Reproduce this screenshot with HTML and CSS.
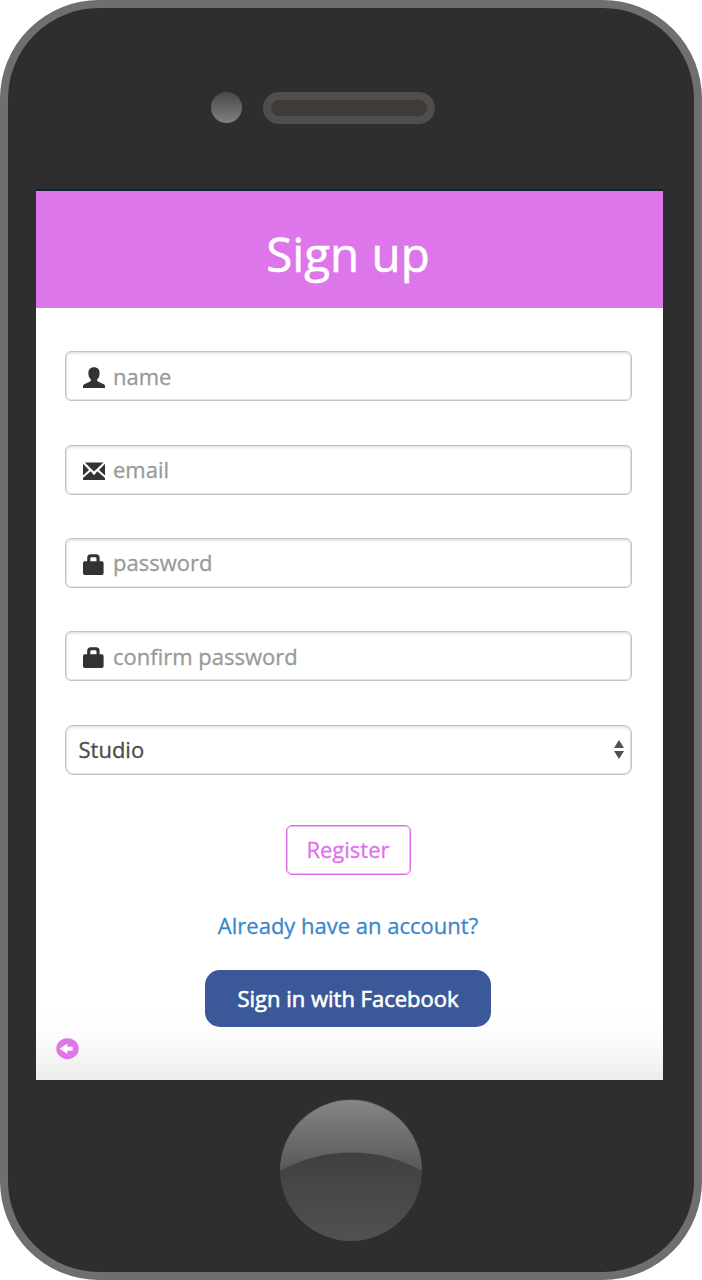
FILE: index.html
```html
<!DOCTYPE html>
<html lang="en">
<head>
<meta charset="utf-8">
<title>Sign up</title>
<link rel="stylesheet" href="styles.css">
</head>
<body>
<div class="phone">
  <div class="earpiece">
    <span class="camera"></span>
    <span class="speaker"></span>
  </div>
  <main class="screen">
    <header class="header"><h1 class="title">Sign up</h1></header>
    <form class="form">
      <label class="field">
        <svg class="icon" viewBox="0 0 24 24"><path d="M12 1.300c3.700 0 5.600 2.300 5.600 5.600 0 2.500-.6 4.600-2 6.100-.8.900-.7 2.100.3 2.600l5.300 2.400c1.400.6 1.800 1.300 1.800 2.700v1.300H1v-1.300c0-1.400.4-2.100 1.800-2.700l5.300-2.400c1-.5 1.100-1.700.3-2.600-1.400-1.500-2-3.600-2-6.100 0-3.300 1.900-5.600 5.600-5.600z"/></svg>
        <span class="hint">name</span>
      </label>
      <label class="field">
        <svg class="icon" viewBox="0 0 24 24"><path d="M2.800 3.500h18.800L12 12.400zM1 4.800l6 6.100-6 5.700zM23 4.800v11.800l-6-5.700zM1 21v-2l7.700-6.700 3.300 3.900 3.300-3.900L23 19v2z"/></svg>
        <span class="hint">email</span>
      </label>
      <label class="field">
        <svg class="icon" viewBox="0 0 24 24"><path fill-rule="evenodd" d="M5.200 8.200V4.700q0-3.500 3.500-3.500h5.400q3.500 0 3.500 3.500v3.500h2.200q1.800 0 1.800 1.800v10.300q0 1.800-1.800 1.800H2.800Q1 22.100 1 20.300V10q0-1.800 1.800-1.800zM8.300 8.200h6.200V5.500q0-1.200-1.200-1.200H9.500q-1.200 0-1.200 1.200z"/></svg>
        <span class="hint">password</span>
      </label>
      <label class="field">
        <svg class="icon" viewBox="0 0 24 24"><path fill-rule="evenodd" d="M5.200 8.200V4.700q0-3.500 3.500-3.500h5.400q3.500 0 3.500 3.500v3.500h2.200q1.800 0 1.800 1.800v10.300q0 1.800-1.800 1.800H2.800Q1 22.100 1 20.300V10q0-1.800 1.800-1.800zM8.300 8.200h6.200V5.500q0-1.200-1.200-1.200H9.500q-1.200 0-1.200 1.200z"/></svg>
        <span class="hint">confirm password</span>
      </label>
      <div class="field select">
        <span>Studio</span>
        <svg class="arrows" viewBox="0 0 10 19"><path d="M5 0l5 8H0zM0 11h10l-5 8z"/></svg>
      </div>
    </form>
    <div class="actions">
      <button class="register" type="button">Register</button>
      <a class="account">Already have an account?</a>
      <button class="facebook" type="button">Sign in with Facebook</button>
    </div>
    <footer class="footer">
      <svg class="back" viewBox="0 0 23 22"><ellipse cx="11.500" cy="10.700" rx="11.200" ry="10.500"/><path fill="#fff" d="M3.600 10.700l7.700-5.300v3.300h5.400v4h-5.400V16z"/></svg>
    </footer>
  </main>
  <svg class="home" viewBox="0 0 142 142">
    <defs>
      <linearGradient id="base" x1="0" y1="0" x2="0" y2="1"><stop offset=".38" stop-color="#404040"/><stop offset="1" stop-color="#515151"/></linearGradient>
      <linearGradient id="shine" x1="0" y1="0" x2="0" y2="1"><stop offset="0" stop-color="#858585"/><stop offset="1" stop-color="#585858"/></linearGradient>
    </defs>
    <circle cx="71" cy="71" r="71" fill="url(#base)"/>
    <path d="M0 72A71 71 0 0 1 142 72Q109 53.500 71 53.500T0 72z" fill="url(#shine)"/>
  </svg>
</div>
</body>
</html>
```
FILE: styles.css
```css
* {
  box-sizing: border-box;
}

body {
  margin: 0;
  background: #fff;
  font-family: "Open Sans", sans-serif;
  font-size: 22px;
  -webkit-text-stroke: .3px currentColor;
}

.phone {
  display: flex;
  flex-direction: column;
  width: 702px;
  height: 1280px;
  padding: 84px 31px 31px 28px;
  border: 8px solid #6f6f6f;
  border-radius: 99px;
  background: #2e2e2e;
}

.earpiece {
  display: flex;
  align-items: flex-start;
  gap: 21px;
  height: 97px;
  padding-left: 175px;
}

.camera {
  width: 31px;
  height: 31px;
  border-radius: 50%;
  background: linear-gradient(#484848, #808080);
}

.speaker {
  width: 172px;
  height: 32px;
  border: 8px solid #4e4e4e;
  border-radius: 16px;
  background: #403b37;
}

.screen {
  display: flex;
  flex-direction: column;
  width: 627px;
  height: 891px;
  border-top: 2px solid #102638;
  background: linear-gradient(#fff 92%, #fdfdfd 95%, #ededed);
}

.header {
  display: flex;
  justify-content: center;
  align-items: center;
  height: 117px;
  padding: 8px 3px 0 0;
  background: #dd76ea;
}

.title {
  margin: 0;
  color: #fff;
  font-size: 47.500px;
  font-weight: 400;
  line-height: 1;
  -webkit-text-stroke-width: .6px;
}

.form {
  display: flex;
  flex-direction: column;
  gap: 43.400px;
  padding: 43.300px 31px 0 29px;
}

.field {
  display: flex;
  align-items: center;
  gap: 7px;
  height: 50px;
  padding: 0 16px;
  border: 1px solid #c4c4c4;
  border-radius: 6px;
  background: #fff;
  box-shadow: inset 0 0 0 1px #e2e2e2, inset 0 2px 3px rgba(0, 0, 0, .09);
}

.hint {
  padding-bottom: 1.500px;
  color: #999;
}

.icon {
  width: 24px;
  height: 24px;
  margin-top: 3px;
  fill: #333;
}

.select {
  justify-content: space-between;
  padding: 0 7px 2px 12.500px;
  border-radius: 8px;
  color: #4c4c4c;
}

.arrows {
  width: 10px;
  height: 19px;
  margin-top: 2px;
  fill: #505050;
}

.actions {
  display: flex;
  flex-direction: column;
  align-items: center;
  padding: 50px 3px 0 0;
}

.register,
.facebook {
  font-family: inherit;
  font-size: 22px;
  -webkit-text-stroke: .3px currentColor;
}

.register {
  width: 125px;
  height: 50px;
  padding: 0 0 2px;
  border: 1px solid #dd66e9;
  border-radius: 6px;
  background: #fff;
  box-shadow: inset 0 0 0 1px #f1bdf6;
  color: #dd72e9;
}

.account {
  margin-top: 34px;
  color: #3988cb;
  line-height: 32px;
}

.facebook {
  width: 286px;
  height: 57px;
  margin-top: 29px;
  padding: 0;
  border: 0;
  border-radius: 15px;
  background: #3b5998;
  color: #fff;
  -webkit-text-stroke-width: .6px;
}

.footer {
  display: flex;
  padding: 11px 0 0 20px;
}

.back {
  width: 23px;
  height: 22px;
  fill: #dd76e8;
}

.home {
  align-self: flex-start;
  flex: none;
  width: 142px;
  height: 142px;
  margin: 19px 0 0 244px;
}
```
